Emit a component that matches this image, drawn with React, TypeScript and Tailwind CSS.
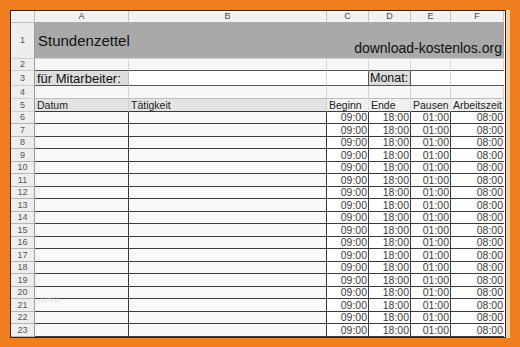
const COLS = ["A", "B", "C", "D", "E", "F"];
const DATA_ROWS = Array.from({ length: 18 }, (_, i) => i + 6);

function RowHead({ n, dark }: { n: number; dark?: boolean }) {
  return (
    <div
      className={`flex items-center justify-center bg-[#eeeeee] border-r border-r-[#9a9a9a] border-b text-[9px] leading-none text-[#555] ${
        dark ? "border-b-[#b5b5b5]" : "border-b-[#cfcfcf]"
      }`}
    >
      {n}
    </div>
  );
}

function Time({ v, last }: { v: string; last?: boolean }) {
  return (
    <div
      className={`flex items-center justify-end pr-[1px] bg-white border-b border-b-[#3a3a3a] text-[10.5px] leading-none text-[#3a3a3a] ${
        last ? "" : "border-r border-r-[#3a3a3a]"
      }`}
    >
      {v}
    </div>
  );
}

export default function App() {
  return (
    <div
      className="w-[520px] h-[347px] bg-[#ef7f1c] pt-[10px] pl-[10px] pr-[10px] pb-[9px] overflow-hidden"
      style={{ fontFamily: '"Liberation Sans", Arial, sans-serif' }}
    >
      <div className="w-[500px] h-[328px] flex">
        <div className="relative w-[496px] h-[328px] border border-[#3b2412] bg-[#f7f7f7]">
          <div className="grid grid-cols-[24px_94px_198px_42px_42px_40px_53px] grid-rows-[12px_36px_12px_15px_13px_13px_repeat(9,12px_13px)] w-[494px] h-[326px]">
            {/* column headers */}
            <div className="bg-[#f2f2f2] border-r border-b border-[#bdbdbd]" />
            {COLS.map((c) => (
              <div
                key={c}
                className="flex items-center justify-center bg-[#f2f2f2] border-r border-r-[#c4c4c4] border-b border-b-[#a8a8a8] text-[9px] leading-none text-[#444]"
              >
                {c}
              </div>
            ))}

            {/* row 1 */}
            <RowHead n={1} />
            <div className="col-span-6 flex justify-between items-start bg-[#a9a9a9] border-b border-b-[#d2d2d2] pl-[3px] pr-[2px]">
              <span className="mt-[9px] text-[15px] leading-[18px] text-[#111]">Stundenzettel</span>
              <span className="self-end mb-[1px] text-[14px] leading-[17px] text-[#111]">download-kostenlos.org</span>
            </div>

            {/* row 2 */}
            <RowHead n={2} />
            {COLS.map((c) => (
              <div key={c} className="bg-[#f7f7f7] border-r border-r-[#d6d6d6] border-b border-b-[#555]" />
            ))}

            {/* row 3 */}
            <RowHead n={3} />
            <div className="flex items-center pl-[2px] bg-[#dcdcdc] border-r border-r-[#bdbdbd] border-b border-b-[#555] text-[13px] leading-none text-[#111]">
              für Mitarbeiter:
            </div>
            <div className="bg-white border-r border-r-[#d6d6d6] border-b border-b-[#555]" />
            <div className="bg-white border-r border-r-[#555] border-b border-b-[#555]" />
            <div className="flex items-center pl-[1px] bg-[#dcdcdc] border-r border-r-[#555] border-b border-b-[#555] text-[12.5px] leading-none text-[#111]">
              Monat:
            </div>
            <div className="bg-white border-r border-r-[#d6d6d6] border-b border-b-[#555]" />
            <div className="bg-white border-b border-b-[#555]" />

            {/* row 4 */}
            <RowHead n={4} />
            {COLS.map((c) => (
              <div key={c} className="bg-[#f7f7f7] border-r border-r-[#d6d6d6] border-b border-b-[#bdbdbd]" />
            ))}

            {/* row 5 */}
            <RowHead n={5} />
            {["Datum", "Tätigkeit", "Beginn", "Ende", "Pausen", "Arbeitszeit"].map((t, i) => (
              <div
                key={t}
                className={`flex items-end pb-[1px] pl-[2px] border-b border-b-[#3a3a3a] text-[10.5px] leading-none text-[#222] ${
                  i < 2 ? "bg-[#e3e3e3] border-r border-r-[#d0d0d0]" : "bg-[#f0f0f0] border-r border-r-[#e0e0e0]"
                }`}
              >
                {t}
              </div>
            ))}

            {/* rows 6-23 */}
            {DATA_ROWS.map((n) => (
              <div key={n} className="contents">
                <RowHead n={n} dark />
                <div className="bg-[#f8f8f8] border-r border-r-[#3a3a3a] border-b border-b-[#3a3a3a]" />
                <div className="bg-[#f8f8f8] border-r border-r-[#3a3a3a] border-b border-b-[#3a3a3a]" />
                <Time v="09:00" />
                <Time v="18:00" />
                <Time v="01:00" />
                <Time v="08:00" last />
              </div>
            ))}
          </div>
          <span className="absolute left-[30px] top-[283px] text-[8px] tracking-wide text-[#dadada]">DKO</span>
        </div>
        <div className="w-[4px] h-[328px] bg-[#f7d3ad]" />
      </div>
    </div>
  );
}
